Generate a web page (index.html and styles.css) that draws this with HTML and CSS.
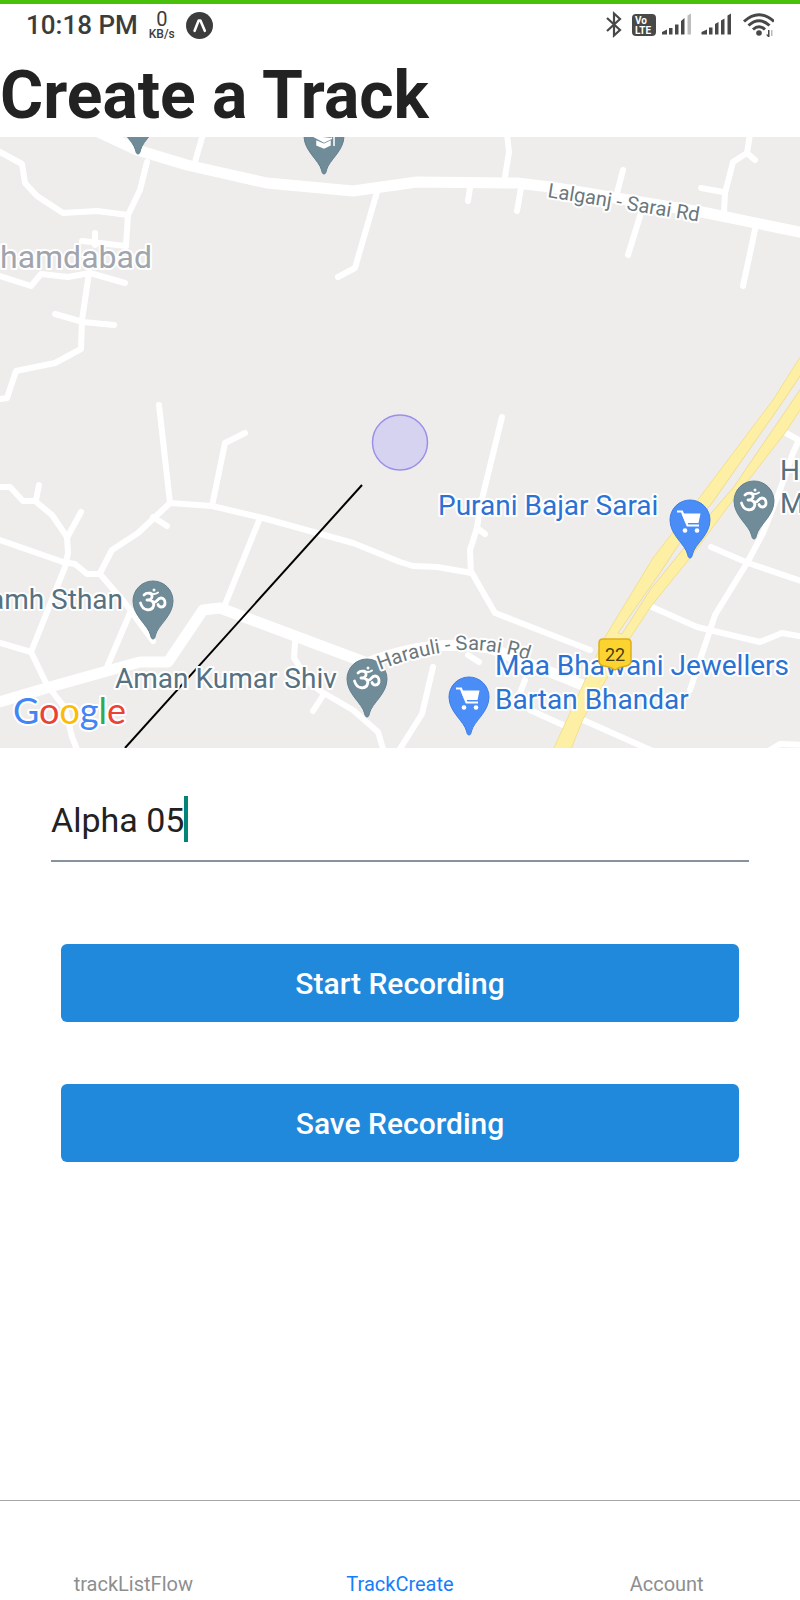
FILE: index.html
```html
<!DOCTYPE html>
<html lang="en">
<head>
<meta charset="utf-8">
<meta name="viewport" content="width=device-width, initial-scale=1">
<title>Create a Track</title>
<link rel="stylesheet" href="styles.css">
</head>
<body>
<header class="status">
  <div class="status-group">
    <span class="clock">10:18 PM</span>
    <span class="speed"><span class="speed-value">0</span><span class="speed-unit">KB/s</span></span>
    <svg class="app-icon" viewBox="0 0 27 27" width="27" height="27" aria-hidden="true">
      <circle cx="13.500" cy="13.500" r="13.500" fill="#3c3c3c"/>
      <path d="M8.600 18.800 L12.600 8.600 H14.400 L18.800 18.800" fill="none" stroke="#fff" stroke-width="2.600" stroke-linejoin="round" stroke-linecap="round"/>
    </svg>
  </div>
  <svg class="signals" viewBox="606 10 168 30" width="168" height="30" role="img" aria-label="Bluetooth, VoLTE, signal, Wi-Fi">
    <path d="M607 18 L620 30 L614 35.500 V13.500 L620 19 L607 31" fill="none" stroke="#484848" stroke-width="2.200"/>
    <rect x="632" y="14" width="24" height="22" rx="4" fill="#484848"/>
    <g class="volte"><text x="635" y="24">Vo</text><text x="635" y="34">LTE</text></g>
    <g fill="#484848">
      <path d="M662 34.500 V32 L667 29.500 V34.500Z M669 28h3.500v6.500H669z M675 24.500h3.500v10H675z M681 21l3.500-3v16.500H681z"/>
      <path d="M687.500 15.500l3.500-2v21h-3.500z" fill="#bdbdbd"/>
      <path d="M701.500 34.500 V32 L707 29.500 V34.500Z M709 27.500h3.500v7H709z M715 24l3.500-2v12.500H715z M721 20.500l3.500-2v16H721z M727.500 15.500l3.500-2v21h-3.500z"/>
      <circle cx="759" cy="33" r="2.800"/>
      <path d="M768 30h1.500v7h-1.500l-2-2.500h2z"/>
      <path d="M771 30h1.500v6H771z" fill="#bbb"/>
    </g>
    <g fill="none" stroke="#484848" stroke-width="3">
      <path d="M744 21.500 Q759 8 774 21.500"/>
      <path d="M748.500 25.500 Q759 16 769.500 25.500"/>
      <path d="M753 29.500 Q759 24 765 29.500"/>
    </g>
  </svg>
</header>

<main class="screen">
  <h1 class="title">Create a Track</h1>

  <svg class="map" viewBox="0 137 800 611" role="img" aria-label="Map">
    <defs>
      <path id="pin" d="M0 38 C-1.500 38 -2 36.500 -2.500 34 C-5 24 -20 15 -20 0 A20 20 0 0 1 20 0 C20 15 5 24 2.500 34 C2 36.500 1.500 38 0 38Z"/>
      <g id="cart">
        <path d="M-13 -8.500 H-8 L-2.500 5.500 H9" fill="none" stroke="#fff" stroke-width="2.200"/>
        <path d="M-8.500 -6.500 H10.500 L8.500 3 H-4.500Z" fill="#fff"/>
        <circle cx="-5" cy="10.500" r="2.300" fill="#fff"/><circle cx="7" cy="10.500" r="2.300" fill="#fff"/>
      </g>
      <g id="om" fill="none" stroke="#fff" stroke-width="2.800" stroke-linecap="round" stroke-linejoin="round">
        <path d="M-9 -6 C-6 -9 0 -8 -1 -4 C-1.500 -1.500 -4 -1 -6 -1 C-2 -1.500 2 1 0.500 5 C-1 10 -10 11 -12.500 2"/>
        <path d="M0.500 1 C4 2.500 4 -3 8 -3 C13 -3 13.500 6 8.500 6 C6.500 6 5.500 5 5 3.500"/>
        <path d="M-3 -8.500 Q1 -5.500 5 -8.500" stroke-width="2"/>
        <circle cx="1" cy="-11" r="0.600" stroke-width="1.800"/>
      </g>
      <path id="harauli" d="M380 670 Q420 654 462 650 Q500 649 536 663"/>
      <path id="lalganj" d="M547 197 L720 225"/>
    </defs>
    <rect x="0" y="137" width="800" height="611" fill="#eeedec"/>

    <g class="lane">
      <path d="M0 152 L22 164 25 183 37 196 63 213 97 211 128 215"/>
      <path d="M147 162 L140 190 128 215 126 246 82 241 M95 233 V245"/>
      <path d="M0 276 L31 286 41 274 68 277 90 273 125 283"/>
      <path d="M89 273 L82 320 81 349 55 363 16 371 7 398 0 399"/>
      <path d="M55 314 L83 322 114 325 M203 134 L195 162 M377 192 L355 268 338 277"/>
      <path d="M159 405 L170 503 M245 433 L225 443 212 506"/>
      <path d="M100 573 L112 550 138 533 170 503 212 506 263 518 353 543 400 562 413 566 437 567 472 573 495 613 590 650"/>
      <path d="M153 517 L167 526 M260 518 L224 607"/>
      <path d="M0 487 L10 487 23 501 35 501 52 515 67 537 68 553 65 567 31 652 47 685 65 708 72 737 78 752"/>
      <path d="M39 485 L36 500 M81 512 L68 536"/>
      <path d="M0 540 L63 562 75 564 87 574 100 574 125 603 153 641 M130 613 L107 667 M0 643 L31 652"/>
      <path d="M295 643 L294 658 310 683 322 692 353 710 378 732 384 752 M322 697 L313 711"/>
      <path d="M433 667 L422 714 398 752 M468 655 L479 662"/>
      <path d="M502 417 L480 507 477 528 470 550 471 573 M477 528 L485 534"/>
      <path d="M786 433 L799 440 793 453 780 490 763 533 747 563 715 615 710 630 690 690"/>
      <path d="M711 547 L748 563 804 582 M652 607 L697 627 760 642 782 633 804 637"/>
      <path d="M525 680 L520 693 M530 710 L563 725 M583 720 L655 752 M770 750 L780 744 804 745"/>
      <path d="M507 134 L509 152 505 177 M470 188 L468 201 M521 188 L517 211"/>
      <path d="M623 170 L617 193 M641 213 L628 255"/>
      <path d="M750 134 L747 153 733 162 725 193 724 212 M747 153 L755 160 M701 188 L723 192 M756 225 L743 286"/>
    </g>
    <g class="road">
      <path d="M94 130 L137 150 187 165 267 183 353 191 417 182 517 183 550 187 707 213 804 233"/>
      <path d="M-4 703 L50 687 107 671 140 662 168 662 203 610 220 608 367 663 Q430 638 490 648 L585 686"/>
    </g>
    <path class="highway" d="M804 351 L773 400 700 497 653 558 605 637 552 752 H570 L583 719 613 668 630 638 652 605 690 558 733 500 785 433 804 404Z"/>
    <path class="median" d="M804 370 L784 400 747 453 712 503 677 547 662 570 618 633 622 634 650 590 680 553 712 512 733 488 793 400 804 384Z"/>

    <circle cx="400" cy="442.500" r="27.500" fill="#d5d3f0" stroke="#9d90ea" stroke-width="1.500"/>

    <text class="label town" x="0" y="268">hamdabad</text>
    <text class="label street"><textPath href="#lalganj">Lalganj - Sarai Rd</textPath></text>

    <path d="M362 485 L125 748" stroke="#000" stroke-width="2"/>

    <g fill="#718c99" stroke="#62808f">
      <use href="#pin" x="138" y="116"/><use href="#pin" x="324" y="136"/>
      <use href="#pin" x="754" y="501"/><use href="#pin" x="153" y="601"/><use href="#pin" x="367" y="679"/>
    </g>
    <path d="M313 136 L324 142 332 138 M317 141.500 V145 L324 148 330 145 V141.500 L324 144.500Z M334 136 V146" fill="#fff" stroke="#fff" stroke-width="1.500"/>
    <use href="#om" x="754" y="501"/><use href="#om" x="153" y="601"/><use href="#om" x="367" y="679"/>
    <g fill="#4a8df6" stroke="#3d7fe6">
      <use href="#pin" x="690" y="520"/><use href="#pin" x="469" y="697"/>
    </g>
    <use href="#cart" x="690" y="520"/><use href="#cart" x="469" y="697"/>

    <text class="label street"><textPath href="#harauli">Harauli - Sarai Rd</textPath></text>
    <g class="label place">
      <text x="123" y="609" text-anchor="end">amh Sthan</text>
      <text x="115" y="688">Aman Kumar Shiv</text>
      <text x="780" y="480">H</text>
      <text x="780" y="513">M</text>
    </g>
    <g class="label shop">
      <text x="438" y="515">Purani Bajar Sarai</text>
      <text x="495" y="675">Maa Bhawani Jewellers</text>
      <text x="495" y="709">Bartan Bhandar</text>
    </g>
    <path d="M603 639 H627 Q631 639 631 643 V661 Q631 665 626 666 Q619 667 615 670 Q611 667 604 666 Q599 665 599 661 V643 Q599 639 603 639Z" fill="#fdd32f" stroke="#dcae1c" stroke-width="1.500"/>
    <text class="shield" x="615" y="661">22</text>
    <text class="label logo" x="13" y="724"><tspan fill="#4285f4">G</tspan><tspan fill="#ea4335">o</tspan><tspan fill="#fbbc05">o</tspan><tspan fill="#4285f4">g</tspan><tspan fill="#34a853">l</tspan><tspan fill="#ea4335">e</tspan></text>
  </svg>

  <form class="form">
    <div class="field">
      <input class="field-input" type="text" value="Alpha 05" aria-label="Track name">
      <span class="caret"></span>
    </div>
    <div class="actions">
      <button class="button" type="button">Start Recording</button>
      <button class="button" type="button">Save Recording</button>
    </div>
  </form>
</main>

<nav class="tabs">
  <a class="tab" href="#list">trackListFlow</a>
  <a class="tab tab-active" href="#create">TrackCreate</a>
  <a class="tab" href="#account">Account</a>
</nav>
</body>
</html>
```
FILE: styles.css
```css
* {
  box-sizing: border-box;
}

body {
  display: flex;
  flex-direction: column;
  min-height: 100vh;
  margin: 0;
  background: #fff;
  color: #222;
  font-family: Roboto, "Liberation Sans", sans-serif;
}

.status {
  display: flex;
  justify-content: space-between;
  align-items: center;
  padding: 6px 26px 12px;
  border-top: 4px solid #49c00a;
  color: #3c3c3c;
}

.status-group {
  display: flex;
  align-items: center;
  gap: 11px;
}

.clock {
  font-size: 26px;
  font-weight: 500;
  line-height: 30px;
}

.speed {
  display: flex;
  flex-direction: column;
  align-items: center;
}

.speed-value {
  font-size: 20px;
  line-height: 17px;
}

.speed-unit {
  font-size: 12px;
  font-weight: 500;
  line-height: 12px;
}

.volte {
  fill: #fff;
  font-size: 10px;
  font-weight: 700;
}

.screen {
  display: flex;
  flex: 1;
  flex-direction: column;
}

.title {
  margin: 0;
  padding-top: 3px;
  font-size: 66px;
  font-weight: 700;
  line-height: 82px;
}

.map {
  display: block;
  width: 100%;
}

.lane,
.road {
  fill: none;
  stroke: #fff;
  stroke-linecap: round;
  stroke-linejoin: round;
}

.lane {
  stroke-width: 6px;
}

.road {
  stroke-width: 11px;
}

.highway {
  fill: #fdefa3;
  stroke: #f3df94;
}

.median {
  fill: #eeedec;
  stroke: #f0dc96;
}

.label {
  paint-order: stroke;
  stroke: #fff;
  stroke-width: 4px;
  stroke-linejoin: round;
}

.town {
  fill: #a0a5ad;
  font-size: 32px;
}

.street {
  fill: #6b777d;
  font-size: 20px;
}

.place {
  fill: #56717f;
  font-size: 28px;
}

.shop {
  fill: #2a72d4;
  font-size: 28px;
}

.shield {
  fill: #4a3c10;
  font-size: 18px;
  text-anchor: middle;
}

.logo {
  font-family: Lato, sans-serif;
  font-size: 36px;
}

.form {
  padding: 40px 51px 0;
}

.field {
  display: flex;
  align-items: flex-start;
  padding: 8px 0 18px;
  border-bottom: 2px solid #86939e;
}

.field-input {
  field-sizing: content;
  padding: 2px 0 0;
  border: 0;
  outline: 0;
  background: none;
  color: #222;
  font: inherit;
  font-size: 34px;
  line-height: 44px;
}

.caret {
  width: 4px;
  height: 46px;
  background: #008577;
}

.actions {
  display: grid;
  gap: 62px;
  padding: 82px 10px 0;
}

.button {
  padding: 20px 19px 18px;
  border: 0;
  border-radius: 6px;
  background: #2089dc;
  color: #fff;
  font: inherit;
  font-size: 30px;
  font-weight: 500;
  line-height: 40px;
}

.tabs {
  display: grid;
  grid-template-columns: repeat(3, 1fr);
  padding: 69px 0 2px;
  border-top: 1px solid #a7a7aa;
}

.tab {
  color: #8e8e8f;
  font-size: 20px;
  line-height: 28px;
  text-align: center;
  text-decoration: none;
}

.tab-active {
  color: #157efb;
}
```
